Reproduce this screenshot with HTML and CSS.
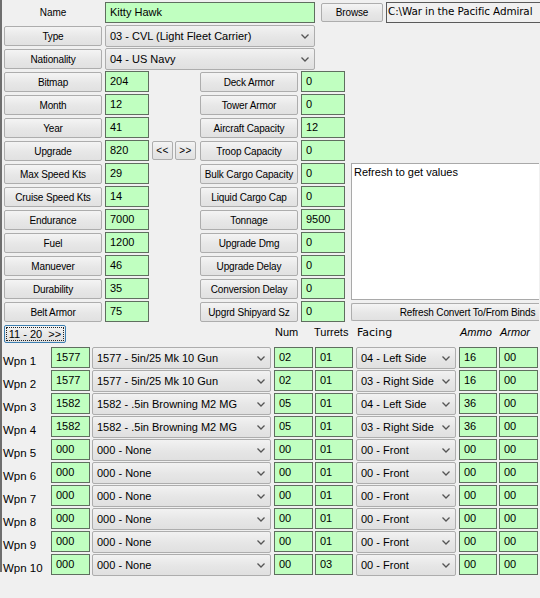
FILE: index.html
```html
<!DOCTYPE html>
<html>
<head>
<meta charset="utf-8">
<link rel="stylesheet" href="styles.css">
</head>
<body>
<div class="wrap">
  <div class="row">
    <div class="namelbl">Name</div>
    <div class="box wide">Kitty Hawk</div>
    <div class="btn browse">Browse</div>
    <div class="path">C:\War in the Pacific Admiral</div>
  </div>
  <div class="row">
    <div class="btn lb">Type</div>
    <div class="dd wide"><span>03 - CVL (Light Fleet Carrier)</span><svg class="chev" width="8" height="5" viewBox="0 0 8 5"><path d="M0.5 0.5 L4 4 L7.5 0.5" fill="none" stroke="#555" stroke-width="1.3"/></svg></div>
  </div>
  <div class="row">
    <div class="btn lb">Nationality</div>
    <div class="dd wide"><span>04 - US Navy</span><svg class="chev" width="8" height="5" viewBox="0 0 8 5"><path d="M0.5 0.5 L4 4 L7.5 0.5" fill="none" stroke="#555" stroke-width="1.3"/></svg></div>
  </div>

  <div class="grid">
    <div class="notes c7">Refresh to get values</div>

    <div class="btn lb c1">Bitmap</div><div class="box sm c2">204</div>
    <div class="btn lb c5">Deck Armor</div><div class="box sm c6">0</div>

    <div class="btn lb c1">Month</div><div class="box sm c2">12</div>
    <div class="btn lb c5">Tower Armor</div><div class="box sm c6">0</div>

    <div class="btn lb c1">Year</div><div class="box sm c2">41</div>
    <div class="btn lb c5">Aircraft Capacity</div><div class="box sm c6">12</div>

    <div class="btn lb c1">Upgrade</div><div class="box sm c2">820</div>
    <div class="btn arrow c3">&lt;&lt;</div><div class="btn arrow c4">&gt;&gt;</div>
    <div class="btn lb c5">Troop Capacity</div><div class="box sm c6">0</div>

    <div class="btn lb c1">Max Speed Kts</div><div class="box sm c2">29</div>
    <div class="btn lb c5">Bulk Cargo Capacity</div><div class="box sm c6">0</div>

    <div class="btn lb c1">Cruise Speed Kts</div><div class="box sm c2">14</div>
    <div class="btn lb c5">Liquid Cargo Cap</div><div class="box sm c6">0</div>

    <div class="btn lb c1">Endurance</div><div class="box sm c2">7000</div>
    <div class="btn lb c5">Tonnage</div><div class="box sm c6">9500</div>

    <div class="btn lb c1">Fuel</div><div class="box sm c2">1200</div>
    <div class="btn lb c5">Upgrade Dmg</div><div class="box sm c6">0</div>

    <div class="btn lb c1">Manuever</div><div class="box sm c2">46</div>
    <div class="btn lb c5">Upgrade Delay</div><div class="box sm c6">0</div>

    <div class="btn lb c1">Durability</div><div class="box sm c2">35</div>
    <div class="btn lb c5">Conversion Delay</div><div class="box sm c6">0</div>

    <div class="btn lb c1">Belt Armor</div><div class="box sm c2">75</div>
    <div class="btn lb c5">Upgrd Shipyard Sz</div><div class="box sm c6">0</div>
    <div class="btn refresh c7">Refresh Convert To/From Binds</div>
  </div>

  <div class="wgrid">
    <div class="btn focus">11 - 20&nbsp;&nbsp;&gt;&gt;</div>
    <div class="h hnum">Num</div>
    <div class="h hturr">Turrets</div>
    <div class="h hface">Facing</div>
    <div class="h hammo">Ammo</div>
    <div class="h harm">Armor</div>
  </div>

  <div class="wgrid">
    <div class="wl">Wpn 1</div><div class="box wid">1577</div>
    <div class="dd wname"><span>1577 - 5in/25 Mk 10 Gun</span><svg class="chev" width="8" height="5" viewBox="0 0 8 5"><path d="M0.5 0.5 L4 4 L7.5 0.5" fill="none" stroke="#555" stroke-width="1.3"/></svg></div>
    <div class="box wn">02</div><div class="box wt">01</div>
    <div class="dd wf"><span>04 - Left Side</span><svg class="chev" width="8" height="5" viewBox="0 0 8 5"><path d="M0.5 0.5 L4 4 L7.5 0.5" fill="none" stroke="#555" stroke-width="1.3"/></svg></div>
    <div class="box wa">16</div><div class="box wr">00</div>
  </div>
  <div class="wgrid">
    <div class="wl">Wpn 2</div><div class="box wid">1577</div>
    <div class="dd wname"><span>1577 - 5in/25 Mk 10 Gun</span><svg class="chev" width="8" height="5" viewBox="0 0 8 5"><path d="M0.5 0.5 L4 4 L7.5 0.5" fill="none" stroke="#555" stroke-width="1.3"/></svg></div>
    <div class="box wn">02</div><div class="box wt">01</div>
    <div class="dd wf"><span>03 - Right Side</span><svg class="chev" width="8" height="5" viewBox="0 0 8 5"><path d="M0.5 0.5 L4 4 L7.5 0.5" fill="none" stroke="#555" stroke-width="1.3"/></svg></div>
    <div class="box wa">16</div><div class="box wr">00</div>
  </div>
  <div class="wgrid">
    <div class="wl">Wpn 3</div><div class="box wid">1582</div>
    <div class="dd wname"><span>1582 - .5in Browning M2 MG</span><svg class="chev" width="8" height="5" viewBox="0 0 8 5"><path d="M0.5 0.5 L4 4 L7.5 0.5" fill="none" stroke="#555" stroke-width="1.3"/></svg></div>
    <div class="box wn">05</div><div class="box wt">01</div>
    <div class="dd wf"><span>04 - Left Side</span><svg class="chev" width="8" height="5" viewBox="0 0 8 5"><path d="M0.5 0.5 L4 4 L7.5 0.5" fill="none" stroke="#555" stroke-width="1.3"/></svg></div>
    <div class="box wa">36</div><div class="box wr">00</div>
  </div>
  <div class="wgrid">
    <div class="wl">Wpn 4</div><div class="box wid">1582</div>
    <div class="dd wname"><span>1582 - .5in Browning M2 MG</span><svg class="chev" width="8" height="5" viewBox="0 0 8 5"><path d="M0.5 0.5 L4 4 L7.5 0.5" fill="none" stroke="#555" stroke-width="1.3"/></svg></div>
    <div class="box wn">05</div><div class="box wt">01</div>
    <div class="dd wf"><span>03 - Right Side</span><svg class="chev" width="8" height="5" viewBox="0 0 8 5"><path d="M0.5 0.5 L4 4 L7.5 0.5" fill="none" stroke="#555" stroke-width="1.3"/></svg></div>
    <div class="box wa">36</div><div class="box wr">00</div>
  </div>
  <div class="wgrid">
    <div class="wl">Wpn 5</div><div class="box wid">000</div>
    <div class="dd wname"><span>000 - None</span><svg class="chev" width="8" height="5" viewBox="0 0 8 5"><path d="M0.5 0.5 L4 4 L7.5 0.5" fill="none" stroke="#555" stroke-width="1.3"/></svg></div>
    <div class="box wn">00</div><div class="box wt">01</div>
    <div class="dd wf"><span>00 - Front</span><svg class="chev" width="8" height="5" viewBox="0 0 8 5"><path d="M0.5 0.5 L4 4 L7.5 0.5" fill="none" stroke="#555" stroke-width="1.3"/></svg></div>
    <div class="box wa">00</div><div class="box wr">00</div>
  </div>
  <div class="wgrid">
    <div class="wl">Wpn 6</div><div class="box wid">000</div>
    <div class="dd wname"><span>000 - None</span><svg class="chev" width="8" height="5" viewBox="0 0 8 5"><path d="M0.5 0.5 L4 4 L7.5 0.5" fill="none" stroke="#555" stroke-width="1.3"/></svg></div>
    <div class="box wn">00</div><div class="box wt">01</div>
    <div class="dd wf"><span>00 - Front</span><svg class="chev" width="8" height="5" viewBox="0 0 8 5"><path d="M0.5 0.5 L4 4 L7.5 0.5" fill="none" stroke="#555" stroke-width="1.3"/></svg></div>
    <div class="box wa">00</div><div class="box wr">00</div>
  </div>
  <div class="wgrid">
    <div class="wl">Wpn 7</div><div class="box wid">000</div>
    <div class="dd wname"><span>000 - None</span><svg class="chev" width="8" height="5" viewBox="0 0 8 5"><path d="M0.5 0.5 L4 4 L7.5 0.5" fill="none" stroke="#555" stroke-width="1.3"/></svg></div>
    <div class="box wn">00</div><div class="box wt">01</div>
    <div class="dd wf"><span>00 - Front</span><svg class="chev" width="8" height="5" viewBox="0 0 8 5"><path d="M0.5 0.5 L4 4 L7.5 0.5" fill="none" stroke="#555" stroke-width="1.3"/></svg></div>
    <div class="box wa">00</div><div class="box wr">00</div>
  </div>
  <div class="wgrid">
    <div class="wl">Wpn 8</div><div class="box wid">000</div>
    <div class="dd wname"><span>000 - None</span><svg class="chev" width="8" height="5" viewBox="0 0 8 5"><path d="M0.5 0.5 L4 4 L7.5 0.5" fill="none" stroke="#555" stroke-width="1.3"/></svg></div>
    <div class="box wn">00</div><div class="box wt">01</div>
    <div class="dd wf"><span>00 - Front</span><svg class="chev" width="8" height="5" viewBox="0 0 8 5"><path d="M0.5 0.5 L4 4 L7.5 0.5" fill="none" stroke="#555" stroke-width="1.3"/></svg></div>
    <div class="box wa">00</div><div class="box wr">00</div>
  </div>
  <div class="wgrid">
    <div class="wl">Wpn 9</div><div class="box wid">000</div>
    <div class="dd wname"><span>000 - None</span><svg class="chev" width="8" height="5" viewBox="0 0 8 5"><path d="M0.5 0.5 L4 4 L7.5 0.5" fill="none" stroke="#555" stroke-width="1.3"/></svg></div>
    <div class="box wn">00</div><div class="box wt">01</div>
    <div class="dd wf"><span>00 - Front</span><svg class="chev" width="8" height="5" viewBox="0 0 8 5"><path d="M0.5 0.5 L4 4 L7.5 0.5" fill="none" stroke="#555" stroke-width="1.3"/></svg></div>
    <div class="box wa">00</div><div class="box wr">00</div>
  </div>
  <div class="wgrid">
    <div class="wl">Wpn 10</div><div class="box wid">000</div>
    <div class="dd wname"><span>000 - None</span><svg class="chev" width="8" height="5" viewBox="0 0 8 5"><path d="M0.5 0.5 L4 4 L7.5 0.5" fill="none" stroke="#555" stroke-width="1.3"/></svg></div>
    <div class="box wn">00</div><div class="box wt">03</div>
    <div class="dd wf"><span>00 - Front</span><svg class="chev" width="8" height="5" viewBox="0 0 8 5"><path d="M0.5 0.5 L4 4 L7.5 0.5" fill="none" stroke="#555" stroke-width="1.3"/></svg></div>
    <div class="box wa">00</div><div class="box wr">00</div>
  </div>
</div>
</body>
</html>
```

FILE: styles.css
```css
html, body {
  margin: 0;
  padding: 0;
}
body {
  background: #f0f0f0;
  width: 540px;
  height: 598px;
  overflow: hidden;
  font-family: "Liberation Sans", Arial, sans-serif;
  color: #000;
}
.wrap {
  box-sizing: border-box;
  width: 540px;
  height: 572px;
  border-left: 2px solid #6e6e6e;
  padding: 2px 0 0 2px;
}
.row {
  display: flex;
  align-items: flex-start;
  height: 23px;
}
.btn {
  box-sizing: border-box;
  height: 20px;
  margin-top: 1px;
  border: 1px solid #adadad;
  border-radius: 2px;
  background: linear-gradient(#f4f4f4, #e7e7e7 55%, #e1e1e1);
  font-size: 10px;
  letter-spacing: -0.15px;
  display: flex;
  align-items: center;
  justify-content: center;
  white-space: nowrap;
}
.lb {
  width: 98px;
}
.namelbl {
  width: 98px;
  height: 21px;
  margin-right: 3px;
  font-size: 10px;
  display: flex;
  align-items: center;
  justify-content: center;
}
.row .lb {
  margin-right: 3px;
}
.box {
  box-sizing: border-box;
  height: 21px;
  border: 1px solid #5f6e5f;
  background: #c0ffc0;
  font-size: 11px;
  line-height: 13px;
  padding: 3px 0 0 4px;
  white-space: nowrap;
  overflow: hidden;
}
.wide {
  width: 210px;
}
.browse {
  width: 62px;
  height: 19px;
  margin-left: 6px;
  margin-top: 1px;
}
.path {
  box-sizing: border-box;
  width: 154px;
  height: 21px;
  margin-left: 3px;
  border: 1px solid #5a5a5a;
  border-right: none;
  font-family: "DejaVu Sans", sans-serif;
  font-size: 10.4px;
  letter-spacing: -0.1px;
  line-height: 15px;
  padding: 1px 0 0 1px;
  white-space: nowrap;
  overflow: hidden;
}
.dd {
  box-sizing: border-box;
  height: 22px;
  border: 1px solid #adadad;
  border-radius: 2px;
  background: linear-gradient(#f2f2f2, #e6e6e6 55%, #e0e0e0);
  font-size: 11px;
  display: flex;
  align-items: center;
  justify-content: space-between;
  padding: 0 5px 0 4px;
  white-space: nowrap;
}
.chev {
  flex: none;
}
.grid {
  display: grid;
  grid-template-columns: 101px 47px 23px 25px 101px 49px 189px;
  grid-auto-rows: 23px;
  align-items: start;
}
.c1 { grid-column: 1; }
.c2 { grid-column: 2; }
.c3 { grid-column: 3; }
.c4 { grid-column: 4; }
.c5 { grid-column: 5; }
.c6 { grid-column: 6; }
.c7 { grid-column: 7; }
.sm {
  width: 44px;
}
.arrow {
  width: 21px;
  height: 19px;
  letter-spacing: 0.5px;
}
.notes {
  grid-row: 5 / span 6;
  box-sizing: border-box;
  width: 188px;
  height: 137px;
  margin-left: 1px;
  border: 1px solid #a9a9a9;
  border-right: none;
  background: #fff;
  font-size: 11px;
  line-height: 13px;
  padding: 2px 0 0 2px;
}
.refresh {
  width: 188px;
  height: 18px;
  margin-left: 1px;
  margin-top: 2px;
  padding-left: 44px;
  border-right: none;
  border-radius: 2px 0 0 2px;
}
.wgrid {
  display: grid;
  grid-template-columns: 48px 41px 182px 41px 41px 103px 40px 41px;
  height: 23px;
  margin-left: -1px;
  align-items: start;
}
.focus {
  grid-column: 1 / span 2;
  width: 62px;
  height: 18px;
  margin-left: 1px;
  border-color: #3c7fb1;
  outline: 1px dotted #222;
  outline-offset: -3px;
  font-size: 11px;
  letter-spacing: 0;
}
.h {
  font-size: 11px;
  line-height: 13px;
  margin-top: 2px;
}
.hnum { grid-column: 4; padding-left: 1px; }
.hturr { grid-column: 5; margin-left: -1px; }
.hface { grid-column: 6; padding-left: 1px; font-family: "DejaVu Sans", sans-serif; }
.hammo { grid-column: 7; padding-left: 1px; font-style: italic; }
.harm { grid-column: 8; padding-left: 1px; font-style: italic; }
.wl {
  font-size: 11.5px;
  line-height: 13px;
  padding-top: 8px;
  white-space: nowrap;
}
.wid { width: 39px; }
.wname { width: 179px; }
.wn { width: 39px; }
.wt { width: 38px; }
.wf { width: 100px; }
.wa { width: 38px; }
.wr { width: 39px; }
```
